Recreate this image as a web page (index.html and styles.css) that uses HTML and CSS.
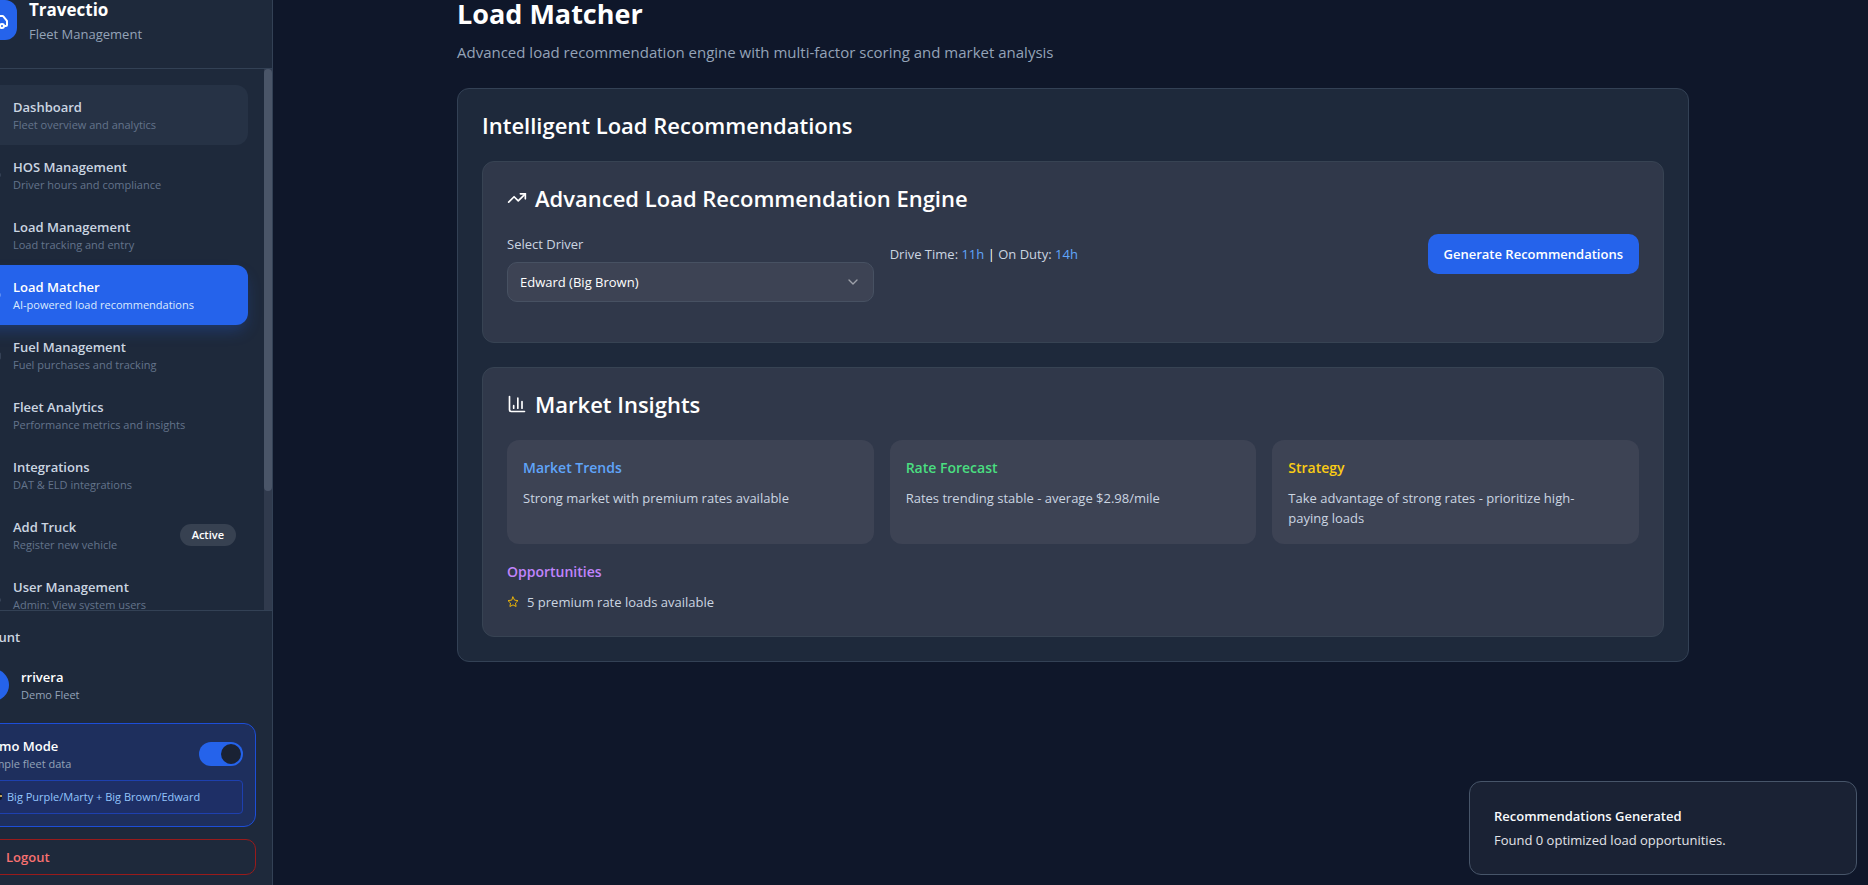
FILE: index.html
```html
<!DOCTYPE html>
<html lang="en">
<head>
<meta charset="utf-8">
<title>Travectio - Load Matcher</title>
<link rel="stylesheet" href="styles.css">
</head>
<body>
<div class="shell">
  <aside class="sidebar">
    <header class="brand">
      <span class="brand-logo">
        <svg class="icon icon-lg" viewBox="0 0 24 24"><path d="M14 18V6a2 2 0 0 0-2-2H4a2 2 0 0 0-2 2v11a1 1 0 0 0 1 1h2"/><path d="M15 18H9"/><path d="M19 18h2a1 1 0 0 0 1-1v-3.650a1 1 0 0 0-.22-.624l-3.480-4.350A1 1 0 0 0 17.520 8H14"/><circle cx="17" cy="18" r="2"/><circle cx="7" cy="18" r="2"/></svg>
      </span>
      <div>
        <p class="brand-name">Travectio</p>
        <p class="brand-sub">Fleet Management</p>
      </div>
    </header>

    <div class="nav-area">
      <nav class="nav">
        <a class="nav-item is-hover" href="#">
          <svg class="icon" viewBox="0 0 24 24"><path d="M3 10l9-7 9 7v11H3z"/></svg>
          <span class="nav-text"><span class="nav-title">Dashboard</span><span class="nav-sub">Fleet overview and analytics</span></span>
        </a>
        <a class="nav-item" href="#">
          <svg class="icon" viewBox="0 0 24 24"><circle cx="12" cy="12" r="10"/><path d="M12 6v6l4 2"/></svg>
          <span class="nav-text"><span class="nav-title">HOS Management</span><span class="nav-sub">Driver hours and compliance</span></span>
        </a>
        <a class="nav-item" href="#">
          <svg class="icon" viewBox="0 0 24 24"><path d="M4 7l8-4 8 4v10l-8 4-8-4z"/><path d="M4 7l8 4 8-4M12 11v10"/></svg>
          <span class="nav-text"><span class="nav-title">Load Management</span><span class="nav-sub">Load tracking and entry</span></span>
        </a>
        <a class="nav-item is-active" href="#" aria-current="page">
          <svg class="icon" viewBox="0 0 24 24"><circle cx="12" cy="12" r="10"/><circle cx="12" cy="12" r="6"/><circle cx="12" cy="12" r="2"/></svg>
          <span class="nav-text"><span class="nav-title">Load Matcher</span><span class="nav-sub">AI-powered load recommendations</span></span>
        </a>
        <a class="nav-item" href="#">
          <svg class="icon" viewBox="0 0 24 24"><path d="M3 22h12M4 9h10M14 22V4a2 2 0 0 0-2-2H6a2 2 0 0 0-2 2v18M14 13h2a2 2 0 0 1 2 2v2a2 2 0 0 0 4 0V9.800a2 2 0 0 0-.6-1.400L18 5"/></svg>
          <span class="nav-text"><span class="nav-title">Fuel Management</span><span class="nav-sub">Fuel purchases and tracking</span></span>
        </a>
        <a class="nav-item" href="#">
          <svg class="icon" viewBox="0 0 24 24"><path d="M18 20V10M12 20V4M6 20v-6"/></svg>
          <span class="nav-text"><span class="nav-title">Fleet Analytics</span><span class="nav-sub">Performance metrics and insights</span></span>
        </a>
        <a class="nav-item" href="#">
          <svg class="icon" viewBox="0 0 24 24"><path d="M4 14L14 3l-2 7h8L10 21l2-7z"/></svg>
          <span class="nav-text"><span class="nav-title">Integrations</span><span class="nav-sub">DAT &amp; ELD integrations</span></span>
        </a>
        <a class="nav-item" href="#">
          <svg class="icon" viewBox="0 0 24 24"><path d="M5 12h14M12 5v14"/></svg>
          <span class="nav-text"><span class="nav-title">Add Truck</span><span class="nav-sub">Register new vehicle</span></span>
          <span class="badge">Active</span>
        </a>
        <a class="nav-item" href="#">
          <svg class="icon" viewBox="0 0 24 24"><path d="M16 21v-2a4 4 0 0 0-4-4H6a4 4 0 0 0-4 4v2"/><circle cx="9" cy="7" r="4"/><path d="M22 21v-2a4 4 0 0 0-3-3.870M16 3.130a4 4 0 0 1 0 7.750"/></svg>
          <span class="nav-text"><span class="nav-title">User Management</span><span class="nav-sub">Admin: View system users</span></span>
        </a>
      </nav>
      <div class="scroll-track"><div class="scroll-thumb"></div></div>
    </div>

    <footer class="account">
      <h2 class="account-title">Account</h2>
      <div class="user">
        <span class="avatar"></span>
        <div>
          <p class="user-name">rrivera</p>
          <p class="user-sub">Demo Fleet</p>
        </div>
      </div>
      <div class="demo">
        <div class="demo-row">
          <label for="demo-mode">
            <span class="user-name">Demo Mode</span>
            <span class="user-sub">Sample fleet data</span>
          </label>
          <input class="switch" type="checkbox" role="switch" id="demo-mode" checked>
        </div>
        <p class="demo-note"><svg class="note-icon" viewBox="0 0 12 12"><rect x="1" y="2" width="10" height="7" rx="2" fill="#111827"/><circle cx="10" cy="5" r="1" fill="#facc6b"/></svg>Big Purple/Marty + Big Brown/Edward</p>
      </div>
      <button class="logout" type="button">
        <svg class="icon" viewBox="0 0 24 24"><path d="M9 21H5a2 2 0 0 1-2-2V5a2 2 0 0 1 2-2h4M16 17l5-5-5-5M21 12H9"/></svg>
        Logout
      </button>
    </footer>
  </aside>

  <main class="main">
    <div class="container">
      <h1 class="page-title">Load Matcher</h1>
      <p class="page-sub">Advanced load recommendation engine with multi-factor scoring and market analysis</p>

      <section class="card">
        <h2 class="card-title">Intelligent Load Recommendations</h2>

        <section class="panel">
          <h3 class="card-title">
            <svg class="icon icon-md" viewBox="0 0 24 24"><path d="M22 7l-8.500 8.500-5-5L2 17"/><path d="M16 7h6v6"/></svg>
            Advanced Load Recommendation Engine
          </h3>
          <div class="thirds engine">
            <div class="field">
              <label for="driver">Select Driver</label>
              <div class="select-box">
                <select id="driver"><option>Edward (Big Brown)</option></select>
                <svg class="icon chevron" viewBox="0 0 24 24"><path d="M6 9l6 6 6-6"/></svg>
              </div>
            </div>
            <div class="engine-side">
              <p class="hours">Drive Time: <span class="blue">11h</span> <span class="sep">|</span> On Duty: <span class="blue">14h</span></p>
              <button class="primary" type="button">Generate Recommendations</button>
            </div>
          </div>
        </section>

        <section class="panel">
          <h3 class="card-title">
            <svg class="icon icon-md" viewBox="0 0 24 24"><path d="M3 3v16a2 2 0 0 0 2 2h16M18 17V9M13 17V5M8 17v-3"/></svg>
            Market Insights
          </h3>
          <div class="thirds">
            <article class="tile"><h4 class="blue">Market Trends</h4><p>Strong market with premium rates available</p></article>
            <article class="tile"><h4 class="green">Rate Forecast</h4><p>Rates trending stable - average $2.98/mile</p></article>
            <article class="tile"><h4 class="yellow">Strategy</h4><p>Take advantage of strong rates - prioritize high-<br>paying loads</p></article>
          </div>
          <div class="opportunities">
            <h4 class="purple">Opportunities</h4>
            <p class="opportunity">
              <svg class="icon icon-xs" viewBox="0 0 24 24"><path d="M12 2l3.090 6.260L22 9.270l-5 4.870 1.180 6.880L12 17.770l-6.180 3.250L7 14.140 2 9.270l6.910-1.010z"/></svg>
              5 premium rate loads available
            </p>
          </div>
        </section>
      </section>
    </div>
  </main>

  <div class="toast" role="status">
    <p class="toast-title">Recommendations Generated</p>
    <p>Found 0 optimized load opportunities.</p>
  </div>
</div>
</body>
</html>
```
FILE: styles.css
```css
* { box-sizing: border-box; margin: 0; padding: 0; }

body {
  background: #0f172a;
  color: #fff;
  font-family: "Open Sans", "Noto Sans", sans-serif;
  font-size: 13px;
  line-height: 20px;
  height: 100vh;
  overflow: hidden;
}

button, select { font: inherit; color: inherit; }
a { color: inherit; text-decoration: none; }

/* The workspace extends past the window on every side. */
.shell {
  position: relative;
  display: flex;
  height: calc(100vh + 34px);
  margin: -28px -5px -6px -47px;
}

.icon {
  width: 16px;
  height: 16px;
  flex: none;
  fill: none;
  stroke: currentColor;
  stroke-width: 2;
  stroke-linecap: round;
  stroke-linejoin: round;
}
.icon-xs { width: 12px; height: 12px; color: #eab308; }
.icon-md { width: 20px; height: 20px; }
.icon-lg { width: 24px; height: 24px; }

.blue { color: #60a5fa; }
.green { color: #4ade80; }
.yellow { color: #facc15; }
.purple { color: #c084fc; }

/* Sidebar */
.sidebar {
  display: flex;
  flex-direction: column;
  flex: none;
  width: 320px;
  background: #1e293b;
  border-right: 1px solid #334155;
}

.brand {
  display: flex;
  align-items: center;
  gap: 12px;
  padding: 24px;
  border-bottom: 1px solid #334155;
}
.brand-logo {
  display: grid;
  place-items: center;
  width: 40px;
  height: 40px;
  border-radius: 12px;
  background: #2563eb;
}
.brand-name { font-size: 17px; font-weight: 700; line-height: 28px; }
.brand-sub { color: #94a3b8; }

.nav-area { display: flex; flex: 1; min-height: 0; }
.nav { flex: 1; padding: 16px; overflow: hidden; }
.nav-item {
  display: flex;
  align-items: center;
  gap: 12px;
  padding: 12px;
  padding-left: 16px;
  border-radius: 12px;
  color: #cbd5e1;
}
.nav-item .icon { color: #64748b; }
.nav-text { flex: 1; }
.nav-title, .nav-sub { display: block; }
.nav-title { font-weight: 600; }
.nav-sub { font-size: 11px; line-height: 16px; color: #64748b; }
.is-hover { background: #263245; }
.is-active {
  background: #2563eb;
  color: #fff;
  box-shadow: 0 8px 16px -3px rgb(37 99 235 / 0.3);
}
.is-active .icon, .is-active .nav-sub { color: #dbeafe; }
.badge {
  padding: 3px 12px;
  border-radius: 11px;
  background: #374151;
  color: #fff;
  font-size: 11px;
  font-weight: 600;
  line-height: 16px;
}

.scroll-track { width: 8px; background: #303a4d; }
.scroll-thumb { height: 78%; border-radius: 4px; background: #4a5568; }

.account {
  display: flex;
  flex-direction: column;
  gap: 12px;
  padding: 16px;
  border-top: 1px solid #334155;
}
.account-title { color: #cbd5e1; font-size: 13px; font-weight: 600; line-height: 20px; }
.user { display: flex; align-items: center; gap: 12px; padding: 8px; }
.avatar { width: 32px; height: 32px; border-radius: 50%; background: #2563eb; }
.user-name { display: block; color: #fff; font-weight: 600; }
.user-sub { display: block; color: #94a3b8; font-size: 11px; line-height: 16px; }

.demo {
  padding: 12px;
  border: 1px solid #1d4ed8;
  border-radius: 12px;
  background: #1e2f5d;
}
.demo-row { display: flex; align-items: center; justify-content: space-between; }
.switch {
  appearance: none;
  display: flex;
  justify-content: flex-end;
  width: 44px;
  height: 24px;
  padding: 2px;
  border-radius: 12px;
  background: #2563eb;
}
.switch::before {
  content: "";
  width: 20px;
  height: 20px;
  border-radius: 50%;
  background: #1a2234;
}
.demo-note {
  display: flex;
  align-items: center;
  gap: 4px;
  margin-top: 8px;
  padding: 8px;
  border: 1px solid #1e40af;
  border-radius: 4px;
  background: #1e2f66;
  color: #93c5fd;
  font-size: 11px;
  line-height: 16px;
  white-space: nowrap;
}
.note-icon { width: 12px; height: 12px; }

.logout {
  display: flex;
  align-items: center;
  gap: 8px;
  height: 36px;
  padding: 0 12px;
  border: 1px solid #991b1b;
  border-radius: 10px;
  background: transparent;
  color: #f87171;
  font-weight: 600;
}

/* Main column */
.main { flex: 1; min-width: 0; }
.container { max-width: 1280px; margin: 0 auto; padding: 24px; }
.page-title { font-size: 27px; font-weight: 700; line-height: 36px; }
.page-sub { margin-top: 8px; color: #94a3b8; font-size: 15px; line-height: 24px; }

.card, .panel {
  margin-top: 24px;
  padding: 24px;
  border: 1px solid #334155;
  border-radius: 12px;
}
.card { background: #1e293b; }
.panel { background: #30384a; border-color: #374353; }
.card-title {
  display: flex;
  align-items: center;
  gap: 8px;
  font-size: 22px;
  font-weight: 600;
  line-height: 24px;
}

.thirds {
  display: grid;
  grid-template-columns: repeat(3, minmax(0, 1fr));
  gap: 16px;
  margin-top: 24px;
}
.engine { margin-bottom: 16px; color: #cbd5e1; }
.field label { display: block; margin-bottom: 8px; }
.select-box { position: relative; color: #fff; }
.select-box select {
  appearance: none;
  display: block;
  width: 100%;
  height: 40px;
  padding: 0 12px;
  border: 1px solid #475162;
  border-radius: 10px;
  background: #3d4354;
}
.chevron { position: absolute; right: 13px; top: 12px; opacity: 0.5; }
.engine-side {
  grid-column: span 2;
  display: flex;
  align-items: center;
  justify-content: space-between;
  align-self: start;
}
.sep { color: #fff; }
.primary {
  height: 40px;
  padding: 0 16px;
  border: 0;
  border-radius: 10px;
  background: #2563eb;
  color: #fff;
  font-weight: 600;
}

.tile { padding: 16px; border-radius: 12px; background: #3d4354; color: #cbd5e1; }
.tile h4, .opportunities h4 {
  margin-bottom: 8px;
  font-size: 14px;
  font-weight: 600;
  line-height: 24px;
}
.opportunities { margin-top: 16px; color: #cbd5e1; }
.opportunity { display: flex; align-items: center; gap: 8px; }

.toast {
  position: absolute;
  right: 16px;
  bottom: 16px;
  width: 388px;
  padding: 24px;
  border: 1px solid #475569;
  border-radius: 12px;
  background: #1a2234;
  color: #e2e4e8;
}
.toast-title { margin-bottom: 4px; color: #f8fafc; font-weight: 600; }
```
